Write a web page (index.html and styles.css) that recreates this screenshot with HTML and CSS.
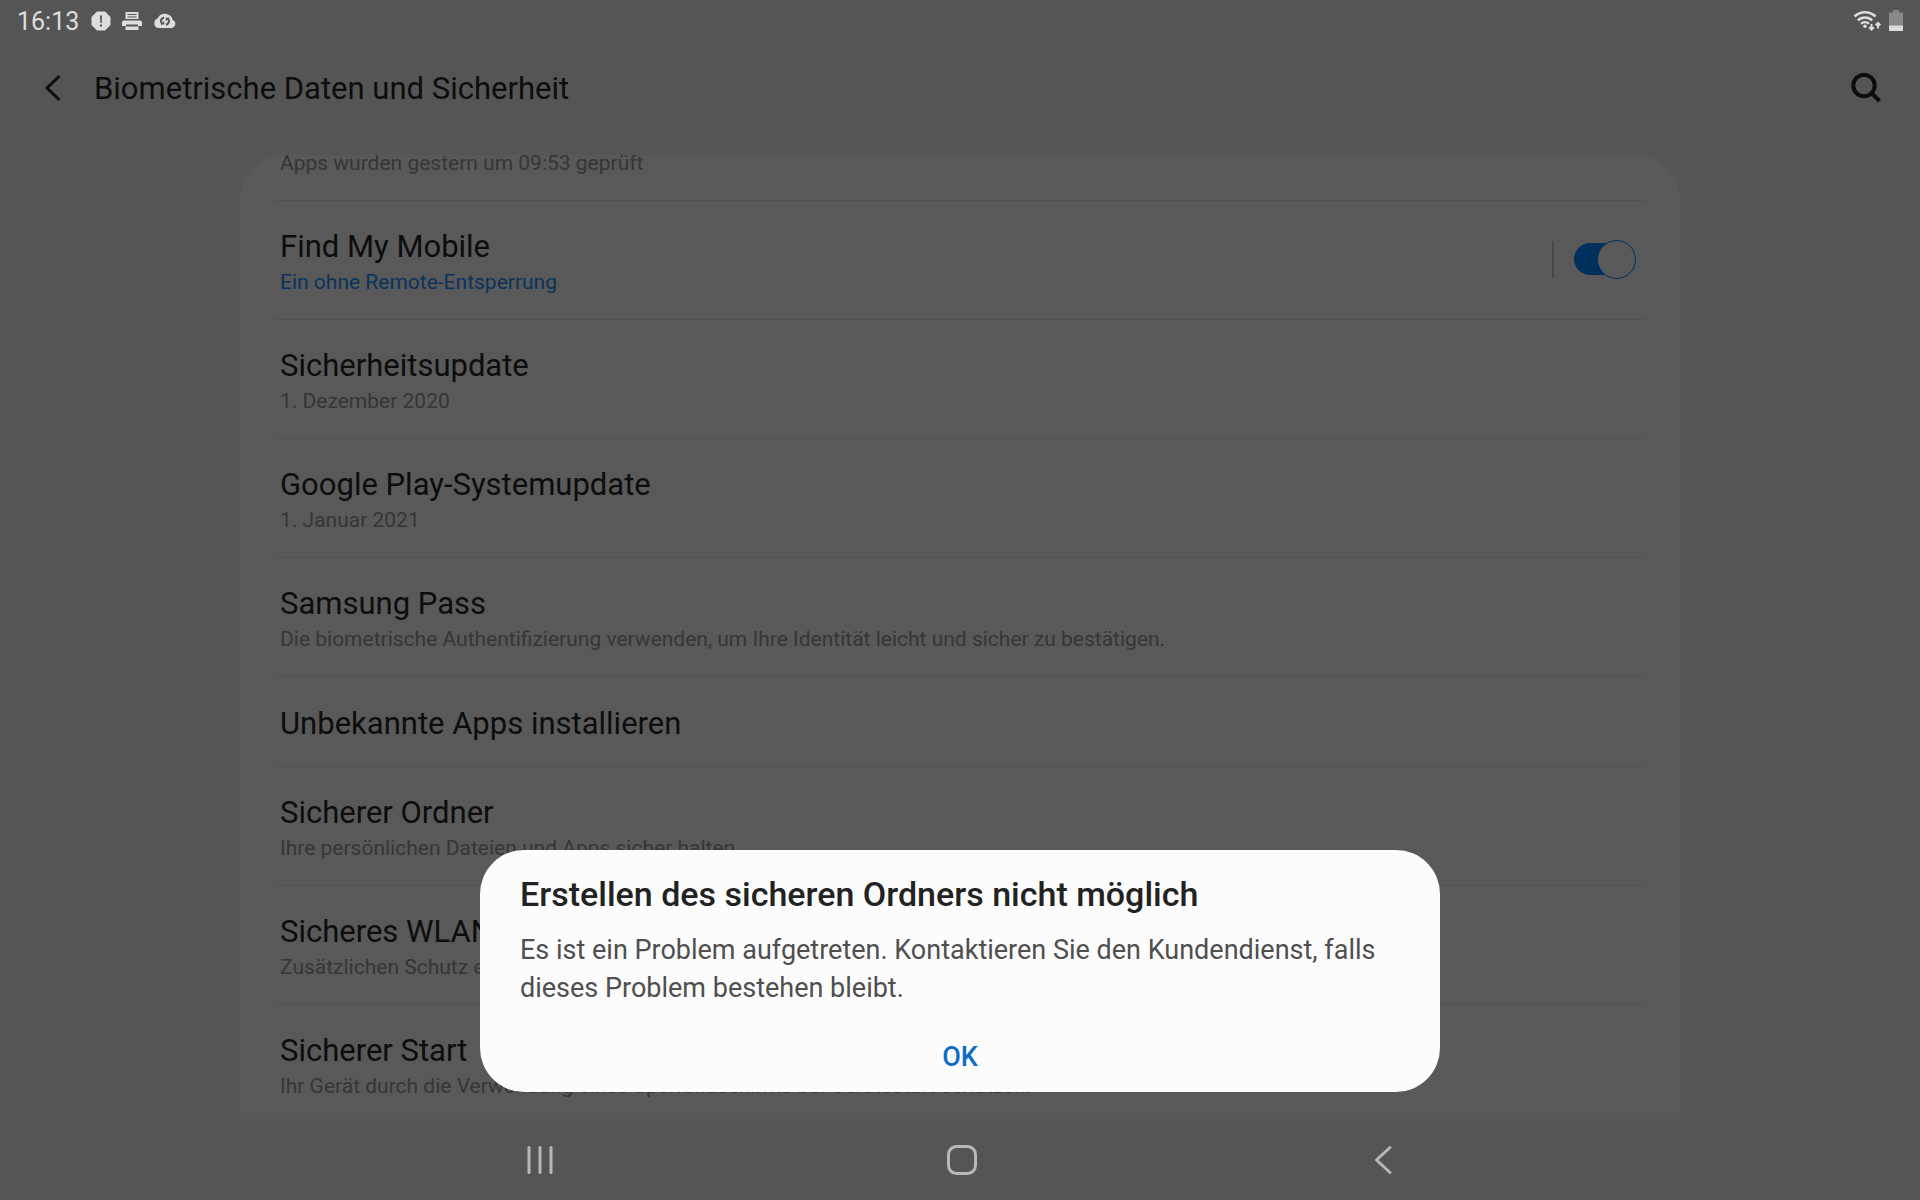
FILE: index.html
```html
<!DOCTYPE html>
<html lang="de">
<head>
    <meta charset="UTF-8">
    <meta name="viewport" content="width=device-width, initial-scale=1.0">
    <title>Biometrische Daten und Sicherheit</title>
    <link rel="stylesheet" href="styles.css">
</head>
<body>
    <div class="statusbar">
        <span class="clock">16:13</span>
        <div class="notifications">
            <!-- Warnung -->
            <svg width="20" height="20" viewBox="0 0 20 20">
                <path class="light" d="M6 .5h8L19.500 6v8L14 19.500H6L.5 14V6z" stroke-linejoin="round"/>
                <path class="cut" d="M9 4.500h2l-.3 7.500H9.300zM9 13.500h2v2H9z"/>
            </svg>
            <!-- Drucker -->
            <svg width="20" height="20" viewBox="0 0 20 20">
                <path class="light" d="M3.500 1h13v7h-13zM2 9.500h16q2 0 2 2V15h-4v-1.500H4V15H0v-3.500q0-2 2-2zM3.500 15.500h13V19h-13z"/>
                <path class="cut" d="M5.500 3h9v1h-9zM5.500 5.500h9v1h-9z"/>
            </svg>
            <!-- Cloud-Sync -->
            <svg width="24" height="20" viewBox="0 0 24 20">
                <path class="light" d="M5 17a5 5 0 0 1-.5-9.500 8 8 0 0 1 15.200 1.600A4.200 4.200 0 0 1 19.500 17z"/>
                <path class="cut-line" d="M11 6.500q-3 1-3 3.700 0 1.800 1.500 3M13 13.800q3-1 3-3.700 0-1.800-1.500-3"/>
                <path class="cut" d="M7.500 13.500h3.700v-3.500zM16.500 6.700h-3.700v3.500z"/>
            </svg>
        </div>
        <div class="signals">
            <!-- WLAN -->
            <svg width="28" height="22" viewBox="0 0 28 22">
                <path class="light-line" d="M1.500 6.500a15 15 0 0 1 21 0M4.800 10.300a10.500 10.500 0 0 1 14.400 0M8 13.700a6 6 0 0 1 8 0"/>
                <circle class="light" cx="12" cy="16.300" r="1.700"/>
                <path class="arrow-line" d="M18.500 14v5.500M16.200 17.300l2.300 2.300 2.300-2.300M25 18.500V13M22.700 15.200l2.300-2.300 2.300 2.300"/>
            </svg>
            <!-- Akku -->
            <svg width="14" height="22" viewBox="0 0 14 22">
                <path class="battery" d="M4 0h6v2.500h4V16H0V2.500h4z"/>
                <path class="light" d="M0 15.500h14V21H0z"/>
            </svg>
        </div>
    </div>

    <header class="header">
        <button class="icon-button" aria-label="Zurück">
            <svg width="18" height="28" viewBox="0 0 18 28">
                <path class="dark-line" d="M15.500 2L3 14l12.500 12"/>
            </svg>
        </button>
        <h1>Biometrische Daten und Sicherheit</h1>
        <button class="icon-button search" aria-label="Suchen">
            <svg width="30" height="30" viewBox="0 0 30 30">
                <circle class="search-line" cx="13" cy="12.500" r="10.700"/>
                <path class="search-line" d="M20.500 20l8 8"/>
            </svg>
        </button>
    </header>

    <main class="content">
        <ul class="card">
            <li class="row scrolled">
                <p class="sub">Apps wurden gestern um 09:53 geprüft</p>
            </li>
            <li class="row">
                <div class="text">
                    <h2 id="find-my-mobile">Find My Mobile</h2>
                    <p class="sub active">Ein ohne Remote-Entsperrung</p>
                </div>
                <div class="switch-area">
                    <input type="checkbox" class="switch" aria-labelledby="find-my-mobile" checked>
                </div>
            </li>
            <li class="row">
                <div class="text">
                    <h2>Sicherheitsupdate</h2>
                    <p class="sub">1. Dezember 2020</p>
                </div>
            </li>
            <li class="row">
                <div class="text">
                    <h2>Google Play-Systemupdate</h2>
                    <p class="sub">1. Januar 2021</p>
                </div>
            </li>
            <li class="row">
                <div class="text">
                    <h2>Samsung Pass</h2>
                    <p class="sub">Die biometrische Authentifizierung verwenden, um Ihre Identität leicht und sicher zu bestätigen.</p>
                </div>
            </li>
            <li class="row">
                <div class="text">
                    <h2>Unbekannte Apps installieren</h2>
                </div>
            </li>
            <li class="row">
                <div class="text">
                    <h2>Sicherer Ordner</h2>
                    <p class="sub">Ihre persönlichen Dateien und Apps sicher halten.</p>
                </div>
            </li>
            <li class="row">
                <div class="text">
                    <h2>Sicheres WLAN</h2>
                    <p class="sub">Zusätzlichen Schutz erhalten.</p>
                </div>
            </li>
            <li class="row">
                <div class="text">
                    <h2>Sicherer Start</h2>
                    <p class="sub">Ihr Gerät durch die Verwendung eines Sperrbildschirms bei Gerätestart schützen.</p>
                </div>
            </li>
        </ul>
    </main>

    <nav class="navbar">
        <button class="icon-button" aria-label="Letzte Apps">
            <svg width="30" height="30" viewBox="0 0 30 30">
                <path class="nav-line" d="M4 2.500v25M15 2.500v25M26 2.500v25"/>
            </svg>
        </button>
        <button class="icon-button" aria-label="Startseite">
            <svg width="30" height="30" viewBox="0 0 30 30">
                <rect class="nav-line" x="1.500" y="1.500" width="27" height="27" rx="8"/>
            </svg>
        </button>
        <button class="icon-button" aria-label="Zurück">
            <svg width="30" height="30" viewBox="0 0 30 30">
                <path class="nav-line" d="M21 2.500L7.500 15 21 27.500"/>
            </svg>
        </button>
    </nav>

    <div class="dialog" role="alertdialog" aria-labelledby="dialog-title" aria-describedby="dialog-text">
        <h2 id="dialog-title">Erstellen des sicheren Ordners nicht möglich</h2>
        <p id="dialog-text">Es ist ein Problem aufgetreten. Kontaktieren Sie den Kundendienst, falls dieses Problem bestehen bleibt.</p>
        <button class="ok">OK</button>
    </div>
</body>
</html>
```
FILE: styles.css
```css
:root {
    --bg: #555555;
    --card: #595959;
    --line: #525252;
    --text: #0d0d0d;
    --sub: #363636;
    --blue: #0b335c;
    --switch: #01305f;
    --light: #dddddd;
    --nav: #b8b8b8;
}

* {
    box-sizing: border-box;
}

body {
    margin: 0;
    height: 100vh;
    display: flex;
    flex-direction: column;
    overflow: hidden;
    background: var(--bg);
    color: var(--text);
    font-family: Roboto, "Noto Sans", sans-serif;
}

h1, h2, p, ul {
    margin: 0;
    padding: 0;
    font-weight: 400;
}

svg {
    display: block;
}

/* Statusleiste */
.statusbar {
    height: 42px;
    flex: none;
    display: flex;
    align-items: center;
    gap: 12px;
    padding: 0 17px;
    color: var(--light);
}

.clock {
    font-size: 25px;
}

.notifications {
    display: flex;
    gap: 11px;
}

.signals {
    display: flex;
    gap: 8px;
    margin-left: auto;
}

.light {
    fill: var(--light);
}

.cut {
    fill: var(--bg);
}

.cut-line, .light-line, .arrow-line {
    fill: none;
    stroke: var(--light);
    stroke-width: 2.5;
}

.cut-line {
    stroke: var(--bg);
    stroke-width: 2;
}

.arrow-line {
    stroke-width: 2;
}

.battery {
    fill: #888888;
}

/* Kopfzeile */
.icon-button {
    display: flex;
    align-items: center;
    justify-content: center;
    padding: 0;
    border: none;
    background: none;
    cursor: pointer;
}

.header {
    height: 92px;
    flex: none;
    display: flex;
    align-items: center;
    gap: 32px;
    padding: 0 39px 0 44px;
}

.header h1 {
    padding-top: 2px;
    font-size: 31px;
    line-height: 40px;
}

.search {
    margin-left: auto;
}

.dark-line, .search-line, .nav-line {
    fill: none;
    stroke: var(--text);
    stroke-width: 3;
}

.search-line {
    stroke-width: 4;
}

/* Liste */
.content {
    flex: 1;
    min-height: 0;
    width: 75%;
    margin: 21px auto 0;
    overflow: hidden;
    border-radius: 44px 44px 0 0;
    background: var(--card);
}

.card {
    list-style: none;
    padding: 0 34px;
}

.row {
    display: flex;
    align-items: center;
    justify-content: space-between;
    min-height: 90px;
    padding: 26px 10px 22px 6px;
    border-bottom: 1px solid var(--line);
}

.row:last-child {
    border-bottom: none;
}

.row h2 {
    font-size: 31px;
    line-height: 40px;
}

.sub {
    font-size: 21px;
    line-height: 30px;
    color: var(--sub);
}

.sub.active {
    color: var(--blue);
}

/* oben aus dem Bild gescrollt */
.scrolled {
    height: 46px;
    min-height: 0;
    align-items: flex-end;
    padding-top: 0;
}

.switch-area {
    display: flex;
    align-items: center;
    height: 37px;
    margin-bottom: 6px;
    padding-left: 20px;
    border-left: 2px solid #474747;
}

.switch {
    appearance: none;
    display: flex;
    align-items: center;
    justify-content: flex-end;
    width: 62px;
    height: 32px;
    margin: 0;
    background: linear-gradient(var(--switch), var(--switch)) 0 0 / 44px 32px no-repeat;
    border-radius: 16px;
    cursor: pointer;
}

.switch::after {
    content: "";
    flex: none;
    width: 37px;
    height: 37px;
    border: 1px solid var(--switch);
    border-radius: 50%;
    background: var(--card);
}

/* Navigationsleiste */
.navbar {
    height: 81px;
    flex: none;
    display: grid;
    grid-template-columns: repeat(3, 22%);
    justify-content: center;
    padding-left: 4px;
}

.nav-line {
    stroke: var(--nav);
    stroke-linecap: round;
    stroke-linejoin: round;
}

/* Dialog */
.dialog {
    position: fixed;
    left: 25%;
    right: 25%;
    bottom: 108px;
    display: flex;
    flex-direction: column;
    padding: 23px 40px 11px;
    border-radius: 44px;
    background: #fcfcfc;
}

.dialog h2 {
    font-size: 34px;
    line-height: 42px;
    font-weight: 500;
    color: #222222;
}

.dialog p {
    margin-top: 16px;
    font-size: 27px;
    line-height: 38px;
    color: #4f4f4f;
}

.ok {
    align-self: center;
    height: 48px;
    margin-top: 26px;
    padding: 0 40px;
    border: none;
    background: none;
    font-family: inherit;
    font-size: 27px;
    font-weight: 500;
    color: #0c6cc4;
    cursor: pointer;
}
```
